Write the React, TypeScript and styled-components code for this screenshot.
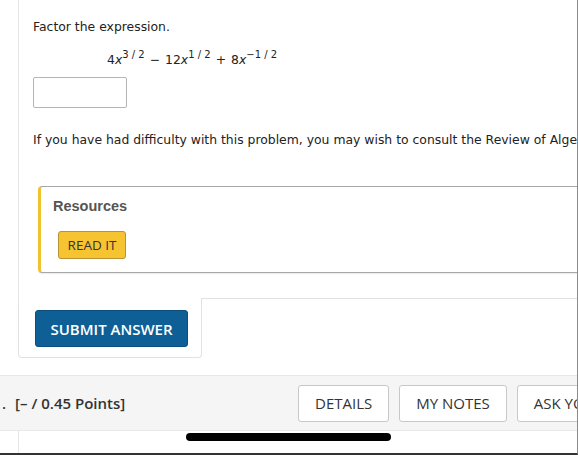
import styled, { createGlobalStyle } from "styled-components";

const GlobalStyle = createGlobalStyle`
  html, body {
    margin: 0;
    padding: 0;
    background: #fff;
  }
  body {
    font-family: "DejaVu Sans", Verdana, sans-serif;
    color: #222;
  }
`;

export default function App() {
  return (
    <Frame>
      <GlobalStyle />
      <QuestionCard>
        <Prompt>Factor the expression.</Prompt>
        <Expression>
          4<Var>x</Var>
          <Sup>3 / 2</Sup>
          <Op>−</Op>12<Var>x</Var>
          <Sup>1 / 2</Sup>
          <Op>+</Op>8<Var>x</Var>
          <Sup>−1 / 2</Sup>
        </Expression>
        <AnswerBox />
        <HelpText>
          If you have had difficulty with this problem, you may wish to consult the Review of Algebra
        </HelpText>
        <Resources>
          <ResourcesTitle>Resources</ResourcesTitle>
          <ReadIt>READ IT</ReadIt>
        </Resources>
      </QuestionCard>
      <SubmitRow>
        <SubmitBox>
          <SubmitButton>SUBMIT ANSWER</SubmitButton>
        </SubmitBox>
        <SubmitFiller />
      </SubmitRow>
      <PointsBar>
        <Points>
          <Num>.</Num>[– / 0.45 Points]
        </Points>
        <Actions>
          <ActionButton>DETAILS</ActionButton>
          <ActionButton>MY NOTES</ActionButton>
          <ActionButton>ASK YOUR TEACHER</ActionButton>
        </Actions>
      </PointsBar>
      <BottomStrip />
      <HomeIndicator />
    </Frame>
  );
}

const Frame = styled.div`
  position: relative;
  width: 578px;
  height: 455px;
  box-sizing: border-box;
  overflow: hidden;
  border-right: 1px solid #8c8c8c;
  border-bottom: 2px solid #333;
  display: flex;
  flex-direction: column;
`;

const QuestionCard = styled.div`
  margin-left: 18px;
  border-left: 1px solid #e6e6e6;
  padding: 19px 0 0 14px;
  height: 298px;
  box-sizing: border-box;
  overflow: hidden;
`;

const Prompt = styled.div`
  font-size: 12.4px;
  line-height: 16px;
  color: #222;
`;

const Expression = styled.div`
  margin: 17px 0 0 74px;
  font-size: 12.4px;
  line-height: 16px;
  white-space: nowrap;
`;

const Var = styled.i`
  font-style: italic;
`;

const Sup = styled.sup`
  font-size: 10px;
  vertical-align: 6px;
  line-height: 0;
  white-space: pre;
`;

const Op = styled.span`
  margin: 0 5px;
`;

const AnswerBox = styled.div`
  margin-top: 9px;
  width: 94px;
  height: 31px;
  box-sizing: border-box;
  border: 1px solid #b5b5b5;
  border-radius: 2px;
`;

const HelpText = styled.div`
  margin-top: 24px;
  font-size: 12.4px;
  line-height: 16px;
  white-space: nowrap;
`;

const Resources = styled.div`
  margin: 38px 0 0 5px;
  width: 560px;
  height: 87px;
  box-sizing: border-box;
  border: 1px solid #a8a8a8;
  border-left: 3px solid #f2c12e;
  border-radius: 4px;
  padding: 10px 0 0 12px;
  box-shadow: 0 1px 1px rgba(0, 0, 0, 0.08);
`;

const ResourcesTitle = styled.div`
  font-family: "Liberation Sans", Arial, sans-serif;
  font-weight: bold;
  font-size: 14.5px;
  line-height: 18px;
  color: #555;
`;

const ReadIt = styled.button`
  margin: 16px 0 0 5px;
  width: 68px;
  height: 28px;
  background: #f6c331;
  border: 1px solid #b89235;
  border-radius: 3px;
  font-family: "Open Sans", sans-serif;
  font-size: 13.5px;
  color: #333;
  padding: 0;
`;

const SubmitRow = styled.div`
  display: flex;
  align-items: flex-start;
  margin-left: 18px;
`;

const SubmitBox = styled.div`
  width: 184px;
  height: 60px;
  box-sizing: border-box;
  border: 1px solid #e2e2e2;
  border-top: none;
  border-radius: 0 0 4px 4px;
  padding: 12px 0 0 16px;
`;

const SubmitFiller = styled.div`
  flex: 1;
  border-top: 1px solid #e2e2e2;
`;

const SubmitButton = styled.button`
  width: 153px;
  height: 37px;
  background: #0d5f96;
  border: 1px solid #0a4f7e;
  border-radius: 3px;
  color: #fff;
  font-family: "Open Sans", sans-serif;
  font-weight: 600;
  font-size: 15px;
  padding: 0;
`;

const PointsBar = styled.div`
  margin-top: 17px;
  height: 56px;
  box-sizing: border-box;
  background: #f5f5f5;
  border-top: 1px solid #e8e8e8;
  border-bottom: 1px solid #e8e8e8;
  display: flex;
  align-items: center;
  padding-left: 2px;
  white-space: nowrap;
  overflow: hidden;
`;

const Points = styled.div`
  font-family: "Open Sans", sans-serif;
  font-weight: 600;
  font-size: 15px;
  color: #333;
  width: 296px;
  flex-shrink: 0;
`;

const Num = styled.span`
  margin-right: 9px;
`;

const Actions = styled.div`
  display: flex;
  gap: 10px;
  flex-shrink: 0;
`;

const ActionButton = styled.button`
  height: 37px;
  padding: 0 16px;
  background: #fff;
  border: 1px solid #c8c8c8;
  border-radius: 3px;
  font-family: "Open Sans", sans-serif;
  font-size: 15px;
  color: #333;
  white-space: nowrap;
  flex-shrink: 0;
`;

const BottomStrip = styled.div`
  flex: 1;
  margin-left: 18px;
  border-left: 1px solid #e6e6e6;
`;

const HomeIndicator = styled.div`
  position: absolute;
  left: 186px;
  top: 433px;
  width: 205px;
  height: 8px;
  border-radius: 4px;
  background: #000;
`;
